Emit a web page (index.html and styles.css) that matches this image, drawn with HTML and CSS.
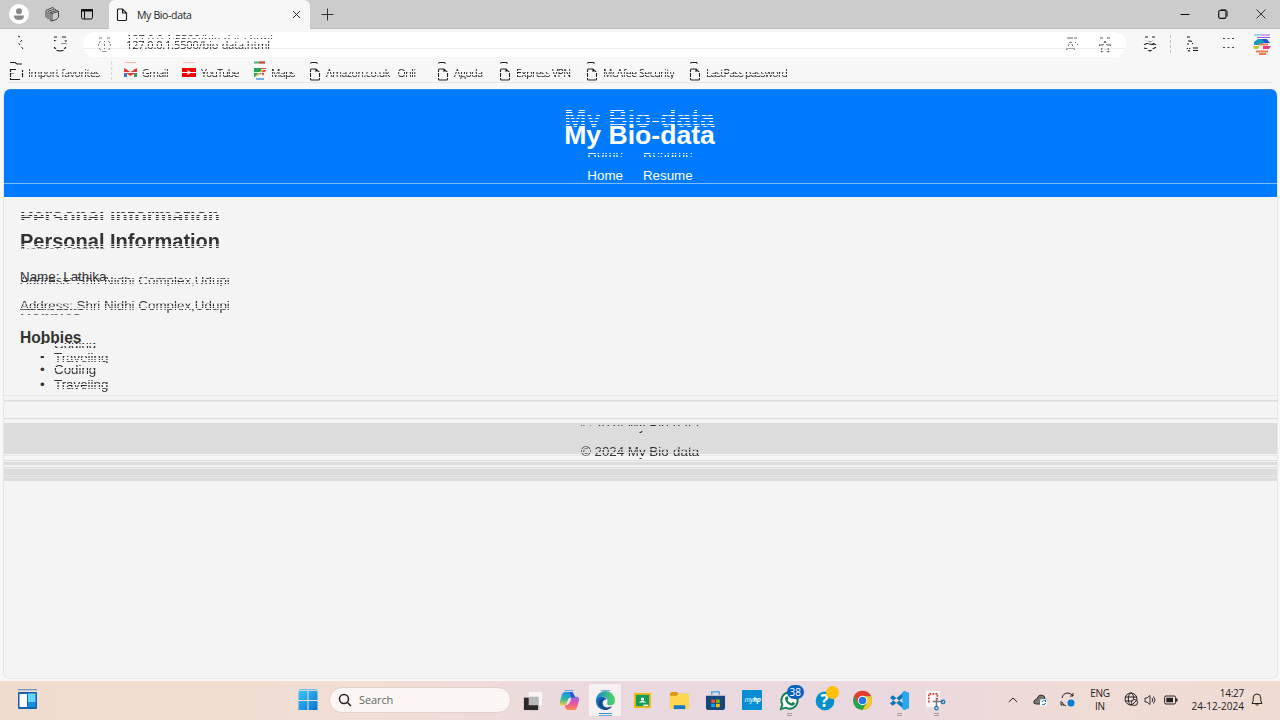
FILE: index.html
```html
<!DOCTYPE html>
<html lang="en">
<head>
<meta charset="utf-8">
<title>My Bio-data</title>
<link rel="stylesheet" href="styles.css">
</head>
<body>
<svg class="defs" aria-hidden="true">
  <symbol id="doc" viewBox="0 0 12 20"><path d="M1.500 2.500Q1.500 1.500 2.500 1.500H7.500L8.500 2.500M1.500 9Q1.500 8 2.500 8H7L10.500 11.500V18Q10.500 19 9.500 19H2.500Q1.500 19 1.500 18ZM7 8V11.500H10.500" fill="none" stroke="#222" stroke-width="1.100"/></symbol>
</svg>
<div class="tabs">
  <div class="tab-tools">
    <span class="avatar"><svg width="20" height="20" viewBox="0 0 20 20"><circle cx="10" cy="7.2" r="3" fill="#888"/><path d="M5 11.500H15Q15 16 10 16T5 11.500Z" fill="#888"/></svg></span>
    <svg class="work" width="16" height="16" viewBox="0 0 16 16" fill="none" stroke="#333" stroke-width=".9"><path d="M6 6.500L12.500 4.500Q14.500 4.500 14.500 6V11L12.500 13.500L7.500 15 6 14ZM4 13V5.500L10.500 3 12 4M2 11.500V4.500L8.500 1.500 10 2.500M8 7.500V15M6 6.500L8 7.500 14.500 5.500"/></svg>
    <svg class="actions" width="14" height="14" viewBox="0 0 14 14"><rect x="1.500" y="2.500" width="11" height="9.500" rx="1.500" fill="none" stroke="#111"/><path d="M1.500 2.500H12.500V4H1.500ZM4.500 4V12" stroke="#111" fill="#111"/></svg>
  </div>
  <div class="tab">
    <svg width="12" height="14" viewBox="0 0 12 14"><path d="M1.500 2Q1.500 1 2.500 1H6.500L10.500 5V11.500Q10.500 12.500 9.500 12.500H2.500Q1.500 12.500 1.500 11.500ZM6.500 1V5H10.500" fill="none" stroke="#222" stroke-width="1.200"/></svg>
    <span class="tab-title">My Bio-data</span>
    <svg width="9" height="9" viewBox="0 0 9 9"><path d="M1 1L8 8M8 1L1 8" stroke="#222"/></svg>
  </div>
  <svg class="plus" width="13" height="13" viewBox="0 0 13 13"><path d="M6.500 .5V12.500M.5 6.500H12.500" stroke="#333"/></svg>
  <div class="window-buttons">
    <svg width="10" height="10" viewBox="0 0 10 10"><path d="M.5 5.500H9.500" stroke="#111"/></svg>
    <svg width="10" height="10" viewBox="0 0 10 10"><rect x=".7" y="1.500" width="7.300" height="7.800" rx="1.500" fill="none" stroke="#111" stroke-width="1.200"/><path d="M2.500 .7H7Q9.200 .7 9.200 3V7.500" fill="none" stroke="#333"/></svg>
    <svg width="10" height="10" viewBox="0 0 10 10"><path d="M.5 .5L9.500 9.500M9.500 .5L.5 9.500" stroke="#333"/></svg>
  </div>
</div>
<div class="toolbar">
  <div class="tool-left">
    <svg width="10" height="20" viewBox="0 0 10 20" fill="none" stroke="#222"><path d="M2 2L4 3M6 6L3 9.500L7 15"/></svg>
    <svg width="16" height="20" viewBox="0 0 16 20" fill="none" stroke="#222" stroke-width="1.100"><path d="M2 3H5M10 3H14M2 7Q8 2 13 6M14 5V9H9M14 11A6 6 0 0 1 2 11"/></svg>
  </div>
  <div class="address">
    <svg class="scan" width="15" height="20" viewBox="0 0 15 20" fill="none" stroke="#777"><path d="M2 3H5M10 3H13"/><circle cx="7.500" cy="10.500" r="6"/><path d="M7.500 9V14M7.500 6V7"/></svg>
    <span class="url"><span class="url-text"><b>127.0.0.1</b>:5500/bio-data.html</span><span class="url-echo" aria-hidden="true">127.0.0.1:5500/bio-data.html</span></span>
    <svg class="scan read" width="14" height="20" viewBox="0 0 14 20" fill="none" stroke="#666"><path d="M2 3H8M9 3H12M1 16L5 7H6L10 16M3 13H8M10 7L13 10"/></svg>
    <svg class="scan" width="14" height="20" viewBox="0 0 14 20" fill="none" stroke="#555"><path d="M2 3H5M9 3H12M7 6L9 10H13L10 13 11 17 7 15 3 17 4 13 1 10H5Z"/></svg>
  </div>
  <div class="tool-right">
    <svg class="scan" width="14" height="20" viewBox="0 0 14 20" fill="none" stroke="#222" stroke-width="1.100"><path d="M2 3H5M9 3H12M2 6Q4 4 5 6M9 6Q11 4 12 6M1 11L6 8 8 8 13 11M3 9L11 11M1 14L4 15 7 17 10 15 13 13"/></svg>
    <i class="divider"></i>
    <svg class="scan" width="14" height="20" viewBox="0 0 14 20" fill="none" stroke="#111" stroke-width="1.100"><path d="M2 3H5M8 5.500H13M3 7L6 7 8 10M2 10H4M2 14L4 17 5 14M8 14H13M8 16.500H13"/></svg>
    <svg width="14" height="20" viewBox="0 0 14 20"><path d="M2 4.500H13M2 13.500H13" stroke="#444" stroke-dasharray="2 2.500"/></svg>
    <svg class="copilot" width="20" height="21" viewBox="0 0 20 21"><path d="M2 1H10" stroke="#46a5da"/><path d="M10 1H18M5 3.500H18" stroke="#ad55d9"/><path d="M2 8L6 5H15L18 9H12L9 11H2Z" fill="#169bb7"/><path d="M10 5H14L18 9H13Z" fill="#2450df"/><path d="M1 12H8L6 15H2Z" fill="#cfc126"/><path d="M11 12H19L17 15H11Z" fill="#e83d83"/><path d="M7 10.500H16M4 17.500H16M7 20H14" stroke="#f17c52" stroke-width="1.800"/></svg>
  </div>
</div>
<div class="bookmarks">
  <span class="mark m0"><svg width="15" height="20" viewBox="0 0 15 20" fill="none" stroke="#222"><path d="M1 1.500H6L8 3H13M1.500 8V18.500H11M1 8.500H7M2 12H5M13.500 9V16" stroke-width="1.200"/></svg><b>Import favorites</b></span>
  <i class="divider"></i>
  <span class="mark m1"><svg width="13" height="20" viewBox="0 0 13 20"><path d="M1 1.500H12" stroke="#f2b3ad"/><path d="M0 8H3V16H0Z" fill="#3978d8"/><path d="M10 8H13V16H10Z" fill="#269d59"/><path d="M0 7L6.500 11 13 7V11L6.500 15 0 11Z" fill="#e13c32"/></svg><b>Gmail</b></span>
  <span class="mark m2"><svg width="14" height="20" viewBox="0 0 14 20"><path d="M1 1.500H13" stroke="#fbb"/><rect y="7" width="14" height="9" fill="#f40000"/><path d="M5.500 9L9.500 11.500 5.500 14Z" fill="#fff"/></svg><b>YouTube</b></span>
  <span class="mark m3"><svg width="13" height="20" viewBox="0 0 13 20"><path d="M1 1.500H12" stroke="#4bb474" stroke-width="2"/><path d="M6 1.500H12M7 7H13" stroke="#ea4335" stroke-width="2"/><path d="M1 7H8V13L1 16Z" fill="#25a55b"/><path d="M7 9H13L10 15Z" fill="#df4132"/><path d="M3 15L10 9" stroke="#f6c644" stroke-width="1.500"/><path d="M3 18H11" stroke="#4b96ed" stroke-width="1.500"/></svg><b>Maps</b></span>
  <span class="mark m4"><svg width="12" height="20"><use href="#doc"/></svg><b>Amazon.co.uk - Onli</b></span>
  <span class="mark m5"><svg width="12" height="20"><use href="#doc"/></svg><b>Agoda</b></span>
  <span class="mark m6"><svg width="12" height="20"><use href="#doc"/></svg><b>Express VPN</b></span>
  <span class="mark m7"><svg width="12" height="20"><use href="#doc"/></svg><b>McAfee Security</b></span>
  <span class="mark m8"><svg width="12" height="20"><use href="#doc"/></svg><b>LastPass password</b></span>
</div>
<div class="page">
  <header class="hero">
    <h1>My Bio-data<span class="echo echo-title" aria-hidden="true">My Bio-data</span></h1>
    <nav><a>Home<span class="echo echo-nav" aria-hidden="true">Home</span></a><a>Resume<span class="echo echo-nav" aria-hidden="true">Resume</span></a></nav>
  </header>
  <main>
    <h2><span class="cut">Personal Information</span><span class="echo echo-h2" aria-hidden="true">Personal Information</span><span class="echo echo-name" aria-hidden="true">Name: Lathika</span></h2>
    <p class="name">Name: Lathika</p>
    <p class="addr"><span class="thin">Address: Shri Nidhi Complex,Udupi</span><span class="echo echo-addr" aria-hidden="true">Address: Shri Nidhi Complex,Udupi</span></p>
    <h3>Hobbies<span class="echo echo-hob" aria-hidden="true">Hobbies</span></h3>
    <ul>
      <li><span class="cut-li">Coding</span><span class="echo echo-coding" aria-hidden="true">Coding</span></li>
      <li><span class="cut-li2">Traveling</span><span class="echo echo-travel" aria-hidden="true">Traveling</span></li>
    </ul>
  </main>
  <div class="rules"></div>
  <footer><span class="copy">© 2024 My Bio-data</span><span class="echo echo-copy" aria-hidden="true">© 2024 My Bio-data</span></footer>
  <div class="stripes"></div>
</div>
<div class="taskbar">
  <svg class="widgets" width="21" height="21" viewBox="0 0 21 21"><path d="M1 .7H20" stroke="#4c86bd"/><rect x="1" y="3" width="19" height="17" rx="1" fill="#1463ad"/><path d="M2.500 5H10V18H2.500Z" fill="#fbfbff"/><path d="M11 4.500H18.500V13H11Z" fill="#63d5fa"/><path d="M11 13H18.500V18H11Z" fill="#178de0"/></svg>
  <svg class="start" width="20" height="22" viewBox="0 0 20 22"><defs><linearGradient id="win" x2="1" y2="1"><stop stop-color="#3bc4f7"/><stop offset="1" stop-color="#0873ce"/></linearGradient></defs><path d="M1 .7H19" stroke="#54b6e8"/><path d="M.5 2H9.500V11H.5ZM10.500 2H19.500V11H10.500ZM.5 12H9.500V21H.5ZM10.500 12H19.500V21H10.500Z" fill="url(#win)"/></svg>
  <div class="search"><svg width="14" height="14" viewBox="0 0 14 14" fill="none" stroke="#222" stroke-width="1.500"><circle cx="6" cy="6" r="4.500"/><path d="M9.500 9.500L13 13"/></svg><span>Search</span></div>
  <div class="apps">
    <span class="app"><svg viewBox="0 0 22 22"><path d="M7 2H21V16H7Z" fill="#faf6f6"/><path d="M2 8H17V21H2Z" fill="#292929"/><path d="M7 7H17V16H7Z" fill="#b9b9b9"/></svg></span>
    <span class="app"><svg viewBox="0 0 22 22"><defs><linearGradient id="cl" x2="0" y2="1"><stop stop-color="#218ee9"/><stop offset=".5" stop-color="#25b7a6"/><stop offset="1" stop-color="#f2cb35"/></linearGradient><linearGradient id="cr" x2="0" y2="1"><stop stop-color="#9568ef"/><stop offset=".5" stop-color="#e654a0"/><stop offset="1" stop-color="#fa8b52"/></linearGradient></defs><path d="M6 2H13Q15 2 16 6L17 8H12Q10 8 9 12L7 16H4Q0 16 1 12L3 5Q4 2 6 2Z" fill="url(#cl)"/><path d="M14 7H18Q22 7 21 11L19 18Q18 21 15 21H9Q7 21 6 16H8Q10 16 11 12Q12 7 14 7Z" fill="url(#cr)"/><path d="M11 2H13Q15 2 17 8H13Z" fill="#2855d6"/><path d="M10 9H13L11 14H8Z" fill="#efe0e7"/><path d="M6 .7H15" stroke="#459fe7"/></svg></span>
    <span class="app active"><svg viewBox="0 0 22 22"><defs><linearGradient id="edge" x2="1"><stop stop-color="#1688d8"/><stop offset="1" stop-color="#57d65e"/></linearGradient></defs><path d="M1 11A10 10 0 0 1 21 11Q21 16 16 16Q12 16 13 13Q14 7 8 7Q3 7 1 11Z" fill="url(#edge)"/><path d="M1 11Q2 7 7 7Q12 7 12 10Q8 10 8 14Q9 20 17 18Q14 21 10 21Q1 20 1 11Z" fill="#1467b6"/><path d="M10 10Q6 12 8 17Q11 20 18 17Q13 23 8 20Q2 15 5 11Q7 8 10 10Z" fill="#114a8b"/><path d="M6 .7H16" stroke="#41a7dc"/></svg><i class="blue-line"></i></span>
    <span class="app"><svg viewBox="0 0 22 22"><path d="M2 3H20V19H2Z" fill="#f4bb1b"/><path d="M4 5H18V17H4Z" fill="#169b58"/><circle cx="11" cy="9.500" r="1.700" fill="#fff"/><path d="M7 13Q11 9.500 15 13Z" fill="#fff"/><path d="M12 16H17" stroke="#fff" stroke-width="1.500"/></svg></span>
    <span class="app"><svg viewBox="0 0 22 22"><path d="M1 4Q1 2 3 2H8L10 4H20V19H1Z" fill="#d99913"/><path d="M1 6H8L10 4H20Q21 4 21 6V20H1Z" fill="#ffd650"/><path d="M5 20V16H17V20" fill="#1877c8"/></svg></span>
    <span class="app"><svg viewBox="0 0 22 22"><path d="M7 5V2H15V5" fill="none" stroke="#35a6e4" stroke-width="1.300"/><path d="M1 6H21V18Q21 21 18 21H4Q1 21 1 18Z" fill="#17477d"/><path d="M6.500 10H10.500V13.500H6.500Z" fill="#f35325"/><path d="M11.500 10H15.500V13.500H11.500Z" fill="#81bc06"/><path d="M6.500 14.500H10.500V18H6.500Z" fill="#05a6f0"/><path d="M11.500 14.500H15.500V18H11.500Z" fill="#ffba08"/></svg></span>
    <span class="app"><span class="hp">my<b>hp</b></span></span>
    <span class="app"><svg viewBox="0 0 22 22"><path d="M2 20L3.500 15A8.500 8.500 0 1 1 7 18.500Z" fill="#fff" stroke="#138253" stroke-width="2"/><path d="M7 7L9 6.500 10 9 9 10.500Q10 13 13 14L14.500 12.500 17 14Q16 17 13 16.500 8 15 6.500 10Q6 8 7 7Z" fill="#138253"/></svg><b class="badge">38</b><i class="gray-line"></i></span>
    <span class="app"><svg viewBox="0 0 22 22"><circle cx="10.500" cy="11.500" r="9.800" fill="#078fca"/></svg><b class="question">?</b><i class="yellow"></i></span>
    <span class="app"><svg viewBox="0 0 22 22"><circle cx="11" cy="11" r="10" fill="#24a44d"/><path d="M2.300 6A10 10 0 0 1 20 6.500H11L6 14Z" fill="#e43c2f"/><path d="M11 6.500H20A10 10 0 0 1 11 21L15.500 13Z" fill="#f9c62c"/><circle cx="11" cy="11" r="5" fill="#fff"/><circle cx="11" cy="11" r="4" fill="#2879e6"/></svg></span>
    <span class="app"><svg viewBox="0 0 22 22"><path d="M1 8L4 5.500 17 16V21ZM1 14L4 16.500 17 6V1Z" fill="#0878bd"/><path d="M14 2L16 1 21 3V19L16 21 14 20Z" fill="#29a8ed"/></svg><i class="gray-line"></i></span>
    <span class="app"><svg viewBox="0 0 22 22"><path d="M1 1H16V18H1Z" fill="#faf7f8"/><path d="M4 13V4H13V10" fill="none" stroke="#c73931" stroke-width="1.700" stroke-dasharray="2 1.200"/><path d="M8 12L19 12M12 8V18" stroke="#777" stroke-width="1.500"/><circle cx="19" cy="12.500" r="1.800" fill="none" stroke="#1777ba" stroke-width="1.300"/><circle cx="12" cy="19" r="1.800" fill="none" stroke="#1777ba" stroke-width="1.300"/></svg><i class="gray-line"></i></span>
  </div>
  <div class="tray">
    <svg class="up" width="10" height="6" viewBox="0 0 10 6"><path d="M.8 5L5 1 9.200 5" fill="none" stroke="#222"/></svg>
    <svg class="cloud" width="15" height="12" viewBox="0 0 15 12"><path d="M3 10Q0 10 1 7Q2 5 4 5Q5 1 8 1Q12 1 12 5Q15 6 13 9L11 10Z" fill="#777" stroke="#333"/><rect x="7" y="5" width="7" height="7" rx="2" fill="#fff"/><path d="M9 8A2 2 0 0 1 12.500 7M12.500 6V8M12.500 9A2 2 0 0 1 9 10" stroke="#0874c9" fill="none"/></svg>
    <svg class="sync" width="15" height="15" viewBox="0 0 15 15"><path d="M2 6Q3 1 8 1Q11 1 13 4M13 1V4H10M1 9V13H4M2 10Q3 13 6 14" fill="none" stroke="#222"/><circle cx="11" cy="11" r="3.500" fill="#087bd5"/></svg>
    <div class="lang"><span>ENG</span><span>IN</span></div>
    <svg class="globe" width="15" height="15" viewBox="0 0 15 15" fill="none" stroke="#222"><circle cx="7" cy="7" r="6"/><ellipse cx="7" cy="7" rx="2.700" ry="6"/><path d="M1 5H13M1 9H13"/><circle cx="10.500" cy="10.500" r="3" fill="#eedbd7"/><path d="M8.500 12.500L12.500 8.500"/></svg>
    <svg class="sound" width="13" height="12" viewBox="0 0 13 12" fill="none" stroke="#333"><path d="M1 4H3L6 1.500V10.500L3 8H1ZM8 4Q9.500 6 8 8M9.500 2.500Q12.500 6 9.500 9.500"/></svg>
    <svg class="battery" width="14" height="10" viewBox="0 0 14 10"><rect x=".6" y="1" width="11" height="8" rx="1.500" fill="none" stroke="#222"/><path d="M2.300 2.700H9V7.300H2.300ZM12 3.500H13.500V6.500H12Z" fill="#222"/></svg>
    <div class="clock"><span>14:27</span><span class="date">24-12-2024</span></div>
    <svg width="12" height="14" viewBox="0 0 12 14" fill="none" stroke="#222"><path d="M1 10.500L2.200 8V5Q2.200 1 6 1T9.800 5V8L11 10.500ZM4.500 11Q6 14 7.500 11"/></svg>
  </div>
</div>
</body>
</html>
```
FILE: styles.css
```css
* { box-sizing: border-box; }
body { margin: 0; width: 1280px; height: 720px; overflow: hidden; background: #f7f7f7; font-family: "Open Sans", "Noto Sans", sans-serif; color: #222; display: flex; flex-direction: column; }
svg { display: block; flex: none; }
.defs { display: none; }
.tabs { height: 29px; flex: none; background: #ccc; border-bottom: 1px solid #bcbcbc; display: flex; align-items: center; }
.tab-tools { width: 109px; display: flex; align-items: center; padding-left: 9px; }
.avatar { width: 20px; height: 20px; border-radius: 50%; background: #fff; }
.work { margin-left: 15px; }
.actions { margin-left: 20px; }
.tab { width: 201px; height: 29px; align-self: flex-start; background: #f7f7f7; border-radius: 6px 6px 0 0; display: flex; align-items: center; padding: 0 9px 0 7px; }
.tab-title { font-size: 10.5px; letter-spacing: -.35px; margin-left: 9px; flex: 1; }
.plus { margin-left: 11px; }
.window-buttons { margin-left: auto; display: flex; gap: 28px; padding-right: 14px; }
.toolbar { height: 30px; flex: none; display: flex; align-items: center; background: linear-gradient(#f7f7f7 2px, #f2f2f2 3px, #f7f7f7 4px); }
.tool-left { width: 83px; display: flex; padding-left: 16px; gap: 26px; }
.tool-left svg, .scan { mask-image: linear-gradient(#000 4px, transparent 4px 6px, #000 6px 8px, transparent 8px 9px, #000 9px 11px, transparent 11px 13px, #000 13px 15px, transparent 15px 16px, #000 16px); }
.address { width: 1043px; height: 25px; border-radius: 12px; background: linear-gradient(#fff 16px, #ededed 16px 17px, #fff 17px); display: flex; align-items: center; padding: 0 14px; margin-top: 1px; }
.url { position: relative; margin-left: 14px; flex: 1; font-size: 11px; line-height: 12px; white-space: nowrap; }
.url-text { display: block; letter-spacing: -.13px; mask-image: linear-gradient(transparent 2px, #000 2px 4px, transparent 4px 5px, #000 5px 7px, transparent 7px 8px, #000 8px); }
.url-text b { font-weight: 500; }
.url-echo { position: absolute; left: 0; top: -6px; letter-spacing: -.02px; mask-image: linear-gradient(transparent 2px, #000 2px 3px, transparent 3px 5px, #000 5px 6px, transparent 6px); }
.read { margin-right: 19px; }
.tool-right { display: flex; align-items: center; padding-left: 17px; gap: 13px; }
.divider { width: 1px; height: 18px; background: repeating-linear-gradient(#c4c4c4 0 3px, transparent 3px 5px); margin-right: 1px; }
.tool-right .scan + svg { margin-left: 9px; }
.tool-right .copilot { margin-left: 4px; }
.bookmarks { height: 24px; flex: none; display: flex; align-items: center; margin: 0 8px; border-bottom: 1px solid #e5e5e5; }
.bookmarks .divider { margin: 0 12px 0 0; opacity: .6; }
.mark { display: flex; align-items: center; gap: 5px; flex: none; height: 22px; }
.mark b { font-weight: 400; font-size: 10.5px; letter-spacing: -.46px; line-height: 14px; margin-top: 4px; white-space: nowrap; mask-image: linear-gradient(transparent 3px, #000 3px 5px, transparent 5px 6px, #000 6px 8px, transparent 8px 9px, #000 9px 13px, transparent 13px); }
.mark svg { mask-image: linear-gradient(#000 4px, transparent 4px 7px, #000 7px 11px, transparent 11px 12px, #000 12px 16px, transparent 16px 17px, #000 17px); }
.m0 { width: 103px; padding-left: 1px; } .m0 b { margin-left: -1px; letter-spacing: -.42px; } .m1 { width: 58px; } .m2 { width: 71px; } .m2 b { letter-spacing: -.8px; } .m3 { width: 56px; } .m3 b { letter-spacing: -.7px; }
.m4 { width: 128px; } .m4 b { letter-spacing: -.4px; } .m5 { width: 62px; } .m6 { width: 87px; } .m6 b { letter-spacing: -.6px; } .m7 { width: 103px; }
.m8 b { letter-spacing: -.65px; }
.page { height: 590px; margin: 6px 2px 0 3px; flex: none; border: 1px solid #e7e7e7; border-top: 0; border-radius: 7px; overflow: hidden; background: #f4f4f4; font-family: "Liberation Sans", Arial, sans-serif; font-size: 13.35px; color: #333; }
h1, h2, h3, p, ul { margin: 0; }
.echo { position: absolute; left: 0; white-space: nowrap; font-weight: inherit; }
.hero { height: 108px; padding-top: 31px; color: #fff; text-align: center; background: linear-gradient(#2588e4 1px, #007bff 1px 94px, #7bbcff 94px 95px, #007bff 95px); }
h1 { position: relative; left: -1px; width: fit-content; margin: 0 auto; font-size: 26.6px; line-height: 30px; }
.echo-title { top: -17px; height: 24px; mask-image: linear-gradient(transparent 7px, #000 7px 8px, transparent 8px 9px, #000 9px 10px, transparent 10px 12px, #000 12px 13px, transparent 13px 15px, #000 15px 16px, transparent 16px 18px, #000 18px 19px, transparent 19px 21px, #000 21px 22px, transparent 22px 23px, #000 23px); }
nav { display: flex; justify-content: center; gap: 20px; line-height: 16px; margin-top: 18px; }
nav a { position: relative; left: -.5px; }
.echo-nav { top: -22px; mask-image: linear-gradient(transparent 7px, #000 7px 8px, transparent 8px 9px, #000 9px 11px, transparent 11px); }
main { height: 198px; padding: 32px 16px 0; }
h2 { position: relative; font-size: 20px; line-height: 24px; }
.cut { display: block; mask-image: linear-gradient(#000 15px, rgba(0,0,0,.4) 15px 16px, #000 16px 17px, transparent 17px 18px, #000 18px); }
.echo-h2 { top: -25px; mask-image: linear-gradient(transparent 8px, #000 8px 9px, transparent 9px 11px, #000 11px 12px, transparent 12px 13px, #000 13px 14px, transparent 14px 15px, #000 15px 16px, transparent 16px); }
.echo-name { top: 10px; font-size: 13.35px; font-weight: 400; opacity: .6; mask-image: linear-gradient(transparent 9px, #000 9px 10px, transparent 10px); }
.name { margin-top: 16px; line-height: 16px; letter-spacing: .03px; }
.addr { position: relative; margin-top: 13px; line-height: 16px; letter-spacing: .02px; }
.thin { display: block; mask-image: linear-gradient(#000 5px, rgba(0,0,0,.35) 5px 6px, #000 6px 8px, rgba(0,0,0,.4) 8px 9px, #000 9px 10px, transparent 10px 11px, #000 11px); }
.echo-addr { top: -25px; mask-image: linear-gradient(transparent 4px, #000 4px 6px, transparent 6px 7px, #000 7px 9px, transparent 9px 10px, #000 10px 11px, transparent 11px 12px, #000 12px 13px, transparent 13px); }
h3 { position: relative; margin-top: 14px; font-size: 15.6px; line-height: 20px; }
.echo-hob { top: -28px; opacity: .7; mask-image: linear-gradient(transparent 9px, #000 9px 10px, transparent 10px 14px, #000 14px 15px, transparent 15px); }
ul { padding-left: 34px; margin-top: 14px; line-height: 15px; list-style: none; }
li { position: relative; }
li::before { content: "•"; position: absolute; left: -14px; }
.cut-li { mask-image: linear-gradient(#000 5px, transparent 5px 6px, #000 6px 8px, rgba(0,0,0,.4) 8px 9px, #000 9px); }
.cut-li2 { mask-image: linear-gradient(#000 4px, transparent 4px 5px, #000 5px 7px, transparent 7px 8px, #000 8px 10px, transparent 10px 11px, #000 11px); }
.echo-coding { top: -25px; mask-image: linear-gradient(transparent 6px, #000 6px 7px, transparent 7px 9px, #000 9px 11px, transparent 11px); }
.echo-travel { top: -27px; mask-image: linear-gradient(transparent 3px, #000 3px 4px, transparent 4px 6px, #000 6px 8px, transparent 8px 9px, #000 9px 10px, transparent 10px 11px, #000 11px 13px, transparent 13px); }
.echo-coding, .echo-travel { left: -14px; padding-left: 14px; }
.echo-coding::before, .echo-travel::before { content: "•"; position: absolute; left: 0; }
.rules { height: 28px; background: linear-gradient(#e6e6e6 1px, transparent 1px 5px, #dcdcdc 5px 6px, #e8e8e8 6px 7px, transparent 7px 23px, #dcdcdc 23px 24px, transparent 24px); }
footer { height: 31px; position: relative; left: -1px; width: calc(100% + 1px); background: #dcdcdc; text-align: center; }
.copy { display: block; padding-top: 21px; line-height: 16px; mask-image: linear-gradient(#000 26px, rgba(0,0,0,.2) 26px 27px, #000 27px 29px, transparent 29px 30px, #000 30px 33px, transparent 33px 35px, #000 35px); }
.echo-copy { left: 0; right: 0; top: -5px; line-height: 16px; mask-image: linear-gradient(transparent 7px, #000 7px 8px, transparent 8px 13px, #000 13px 15px, transparent 15px); }
.stripes { height: 27px; background: linear-gradient(transparent 1px, #e8e8e8 1px 2px, transparent 2px 6px, #dcdcdc 6px 7px, transparent 7px 8px, #dcdcdc 8px 11px, transparent 11px 13px, #e0e0e0 13px 14px, #ececec 14px 15px, #dcdcdc 15px 21px, #e8e8e8 21px 22px, #dcdcdc 22px 23px, #e8e8e8 23px 24px, #dcdcdc 24px 27px); }
.taskbar { margin-top: 2px; height: 39px; flex: none; display: flex; align-items: center; padding-left: 17px; background: linear-gradient(90deg, #f0dccf, #f1ded4 28%, #e9d9df 48%, #ead8df 68%, #efdcd5 85%, #efdbd2); }
.taskbar > svg { position: relative; top: -1px; }
.start { margin-left: 260px; }
.search { margin-left: 11px; width: 182px; height: 26px; border: 1px solid #e4d2ca; border-radius: 13px; background: #fbf5f3; display: flex; align-items: center; padding-left: 8px; gap: 7px; font-size: 11px; letter-spacing: -.1px; color: #666; margin-top: -2px; }
.apps { display: flex; margin-left: 3px; margin-top: -1px; }
.app { position: relative; width: 36.7px; height: 32px; display: grid; place-items: center; }
.app svg { width: 21px; height: 21px; }
.active { background: linear-gradient(90deg, transparent 2px, #f7f0f2 2px 34px, transparent 34px); }
.blue-line, .gray-line { position: absolute; bottom: 0; left: 12px; width: 13px; height: 3px; border-top: 1px solid #328dce; border-bottom: 1px solid #62a9da; }
.gray-line { left: 16px; width: 5px; border-color: #a49ba1; }
.hp { width: 20px; height: 20px; background: #078ed2; color: #fff; font: italic 7px/20px "Open Sans", sans-serif; text-align: center; letter-spacing: -.4px; }
.badge { position: absolute; left: 16px; top: 1px; width: 17px; height: 14px; border-radius: 7px; background: #0863bd; color: #fff; font: 10px/14px "Open Sans", sans-serif; text-align: center; }
.question { position: absolute; left: 13px; top: 6px; color: #fff; font: 700 17px/21px "Open Sans", sans-serif; }
.yellow { position: absolute; left: 18px; top: 2px; width: 13px; height: 13px; border-radius: 50%; background: #ffc10b; }
.tray { flex: 1; display: flex; align-items: center; justify-content: flex-end; padding-right: 17px; font-size: 10px; line-height: 13px; letter-spacing: -.25px; margin-top: -2px; }
.cloud { margin-left: 15px; } .sync { margin-left: 12px; }
.lang { width: 22px; margin-left: 14px; display: flex; flex-direction: column; align-items: center; }
.globe { margin-left: 13px; } .sound { margin-left: 5px; } .battery { margin-left: 7px; }
.clock { width: 60px; margin-left: 6px; margin-right: 7px; display: flex; flex-direction: column; align-items: flex-end; }
.date { letter-spacing: .03px; }
```
